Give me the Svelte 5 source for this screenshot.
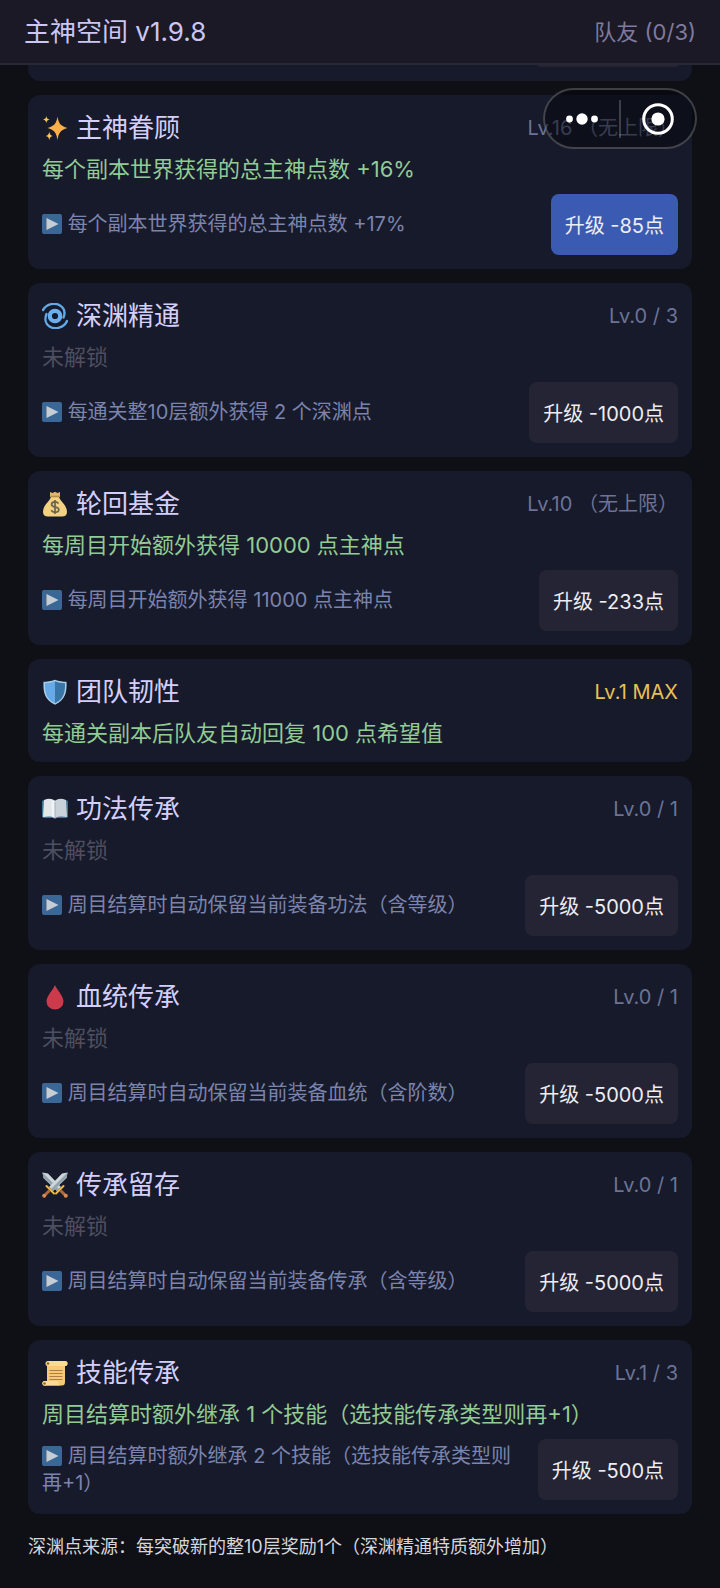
<script lang="ts">
	type Trait = {
		icon: string;
		name: string;
		level: string;
		maxed?: boolean;
		current?: string;
		next?: string;
		cost?: number;
		affordable?: boolean;
	};

	const version = '1.9.8';
	const teammates = 0;

	const traits: Trait[] = [
		{
			icon: 'sparkles',
			name: '主神眷顾',
			level: 'Lv.16 （无上限）',
			current: '每个副本世界获得的总主神点数 +16%',
			next: '每个副本世界获得的总主神点数 +17%',
			cost: 85,
			affordable: true
		},
		{ icon: 'cyclone', name: '深渊精通', level: 'Lv.0 / 3', next: '每通关整10层额外获得 2 个深渊点', cost: 1000 },
		{
			icon: 'money',
			name: '轮回基金',
			level: 'Lv.10 （无上限）',
			current: '每周目开始额外获得 10000 点主神点',
			next: '每周目开始额外获得 11000 点主神点',
			cost: 233
		},
		{ icon: 'shield', name: '团队韧性', level: 'Lv.1 MAX', maxed: true, current: '每通关副本后队友自动回复 100 点希望值' },
		{ icon: 'book', name: '功法传承', level: 'Lv.0 / 1', next: '周目结算时自动保留当前装备功法（含等级）', cost: 5000 },
		{ icon: 'blood', name: '血统传承', level: 'Lv.0 / 1', next: '周目结算时自动保留当前装备血统（含阶数）', cost: 5000 },
		{ icon: 'swords', name: '传承留存', level: 'Lv.0 / 1', next: '周目结算时自动保留当前装备传承（含等级）', cost: 5000 },
		{
			icon: 'scroll',
			name: '技能传承',
			level: 'Lv.1 / 3',
			current: '周目结算时额外继承 1 个技能（选技能传承类型则再+1）',
			next: '周目结算时额外继承 2 个技能（选技能传承类型则再+1）',
			cost: 500
		}
	];
</script>

{#snippet sword()}
	<path d="M.5.5L6 1.500l13 13.500-4 4L1.500 6z" fill="#cdd6da" />
	<path d="M.5.5L17 17l-2 2L1.500 6z" fill="#93a4ad" />
	<path d="M14 21.500l7.500-7.500" stroke="#f0b93f" stroke-width="2" stroke-linecap="round" />
	<path d="M18.500 18.500l4.500 4.500" stroke="#b5673f" stroke-width="3" />
	<circle cx="23.800" cy="23.800" r="2" fill="#d98a4e" />
{/snippet}

{#snippet traitIcon(kind: string)}
	<svg class="icon" viewBox="0 0 26 26" aria-hidden="true">
		{#if kind === 'sparkles'}
			<path d="M15.500 1.500c1.200 7 3 9.500 10 11.500-7 2-8.800 4.500-10 12-1.200-7.500-3-10-10-12 7-2 8.800-4.500 10-11.500z" fill="#f9b04b" />
			<path d="M4.300 1c.5 2.300 1 2.900 3.300 3.600-2.300.6-2.800 1.200-3.300 3.600C3.800 5.800 3.300 5.200 1 4.600 3.300 3.900 3.800 3.300 4.300 1z" fill="#fbc65a" />
			<path d="M7.300 16.500c.5 3 1.100 3.800 3.600 4.500-2.500.7-3.100 1.500-3.600 4.300-.5-2.800-1.100-3.600-3.600-4.300 2.500-.7 3.100-1.500 3.600-4.500z" fill="#fbc65a" />
		{:else if kind === 'cyclone'}
			<circle cx="13" cy="13" r="5.200" fill="none" stroke="#6bb0ee" stroke-width="4.200" />
			<path d="M1 7C5 .500 13-.500 18 2.500c4 2.500 5.500 7 3.500 12" fill="none" stroke="#62a9e8" stroke-width="2.400" stroke-linecap="round" />
			<path d="M25 18c-3 7-12 9-17.500 5.500C3.500 21 2.500 16 4.500 11" fill="none" stroke="#62a9e8" stroke-width="2.400" stroke-linecap="round" />
		{:else if kind === 'money'}
			<path d="M8 1l2.500 1L13 .800 15.500 2 18 1v5H8z" fill="#e4b565" />
			<path d="M9 6h8c1 4 8 8 8 15 0 3-2 4.500-5 4.500H6c-3 0-5-1.500-5-4.500C1 14 8 10 9 6z" fill="#f3d183" />
			<path d="M8.500 5.500h9" stroke="#b58a45" stroke-width="1.500" />
			<path d="M16.500 12.500c-1-1.300-2-1.700-3.500-1.700-2 0-3.400 1-3.400 2.600 0 3.600 7.200 1.700 7.200 5.200 0 1.700-1.600 2.700-3.700 2.700-1.700 0-3-.6-3.900-2M13 9v14" fill="none" stroke="#696451" stroke-width="1.700" />
		{:else if kind === 'shield'}
			<path d="M13 .800c4 1.500 8 2 11.500 2C25 13 23.500 21 13 25.800 2.500 21 1 13 1.500 2.800 5 2.800 9 2.300 13 .800z" fill="#a9cfe8" />
			<path d="M13 2.300v22C4 20 2.800 13 3 4.200c3.500 0 7-.6 10-1.900z" fill="#66aae8" />
			<path d="M13 2.300c3 1.300 6.500 1.900 10 1.900.2 8.800-1 15.800-10 20.100z" fill="#3a75a8" />
		{:else if kind === 'book'}
			<path d="M0 5l2-1h22l2 1v16l-2 1H15l-2 1-2-1H2l-2-1z" fill="#457494" />
			<path d="M2 4c5-1.800 8-1.500 11 1v17c-4-2-8-1.500-12-1z" fill="#e2e7eb" />
			<path d="M24 4c-5-1.800-8-1.500-11 1v17c4-2 8-1.500 12-1z" fill="#cad2d9" />
			<path d="M9.500 4l3.500 2v16l-3-1.500z" fill="#f2f4f5" />
			<path d="M13 6v16" stroke="#a3afb9" stroke-width="1" />
		{:else if kind === 'blood'}
			<path d="M13 1c2 5 8.500 11 8.500 16.500a8.500 8 0 0 1-17 0C4.500 12 11 6 13 1z" fill="#cb3b4b" />
		{:else if kind === 'swords'}
			<g>{@render sword()}</g>
			<g transform="translate(26 0) scale(-1 1)">{@render sword()}</g>
		{:else}
			<path d="M6 1h17c3 0 3.500 4 .500 5H23v16c0 2.500-1 3.500-3 3.500H3L5 21V6z" fill="#f3ca75" />
			<path d="M6 1h17c3 0 3.500 4 .500 5H7z" fill="#f9dc94" />
			<path d="M2.500 21H17c-1.500 2 0 4.500 2 4.500H3c-3 0-3.500-4-.500-4.500z" fill="#f9dc94" />
			<path d="M7.500 10.500h13M7.500 13.500h13M7.500 16.500h13M7.500 19.500h13" stroke="#b47a45" stroke-width="1.200" />
			<circle cx="6" cy="3.500" r="2.500" fill="#f9dc94" />
			<circle cx="6" cy="3.500" r="1.300" fill="#925837" />
			<circle cx="2.500" cy="23.500" r="2.200" fill="#f9dc94" />
			<circle cx="2.500" cy="23.500" r="1.200" fill="#925837" />
		{/if}
	</svg>
{/snippet}

<div class="page">
	<header>
		<h1>主神空间 v{version}</h1>
		<span class="team">队友 ({teammates}/3)</span>
	</header>

	<div class="capsule">
		<button class="cap-btn" aria-label="更多">
			<svg width="32" height="14" viewBox="0 0 32 14">
				<circle cx="3.500" cy="7" r="3.400" />
				<circle cx="16" cy="7" r="5.700" />
				<circle cx="28.500" cy="7" r="3.400" />
			</svg>
		</button>
		<span class="divider"></span>
		<button class="cap-btn" aria-label="关闭">
			<svg width="32" height="32" viewBox="0 0 32 32">
				<circle cx="16" cy="16" r="14.300" class="ring" />
				<circle cx="16" cy="16" r="6.600" />
			</svg>
		</button>
	</div>

	<main>
		<!-- tail of the card scrolled under the header -->
		<div class="tail"><span></span></div>

		{#each traits as trait (trait.name)}
			<article class="card">
				<div class="head">
					{@render traitIcon(trait.icon)}
					<h2>{trait.name}</h2>
					<span class="level" class:maxed={trait.maxed}>{trait.level}</span>
				</div>
				<p class="effect" class:locked={!trait.current}>{trait.current ?? '未解锁'}</p>
				{#if trait.next}
					<div class="action">
						<p class="next">
							<svg class="play" viewBox="0 0 20 20" aria-hidden="true">
								<rect width="20" height="20" rx="2" fill="#3b6797" />
								<path d="M4.500 4l12 6-12 6z" fill="#c6cdd4" />
							</svg>
							{trait.next}
						</p>
						<button class="upgrade" class:affordable={trait.affordable}>升级 -{trait.cost}点</button>
					</div>
				{/if}
			</article>
		{/each}

		<p class="note">深渊点来源：每突破新的整10层奖励1个（深渊精通特质额外增加）</p>
	</main>
</div>

<style>
	:global(body) {
		background: #0f0f16;
	}
	.page {
		font-family: Inter, 'Noto Sans CJK SC', sans-serif;
		color: #d6d6de;
	}
	h1,
	h2,
	p {
		margin: 0;
		font-weight: 400;
	}
	header {
		position: sticky;
		top: 0;
		z-index: 1;
		display: flex;
		align-items: center;
		justify-content: space-between;
		box-sizing: border-box;
		height: 65px;
		padding: 0 24px;
		background: #1a1925;
		border-bottom: 2px solid #292936;
	}
	h1 {
		font-size: 26px;
		line-height: 36px;
		color: #cbc6f4;
	}
	.team {
		font-size: 22px;
		line-height: 36px;
		color: #7f7a9e;
	}

	/* floating mini-program menu */
	.capsule {
		position: fixed;
		top: 88px;
		right: 23px;
		z-index: 2;
		display: flex;
		align-items: center;
		box-sizing: border-box;
		width: 154px;
		height: 61px;
		background: rgba(4, 5, 12, 0.5);
		border: 2px solid rgba(255, 255, 255, 0.22);
		border-radius: 31px;
	}
	.cap-btn {
		display: flex;
		flex: 1;
		align-items: center;
		justify-content: center;
		height: 100%;
		padding: 0;
		background: none;
		border: none;
		cursor: pointer;
	}
	.cap-btn svg {
		fill: #fff;
	}
	.cap-btn .ring {
		fill: none;
		stroke: #fff;
		stroke-width: 3;
	}
	.divider {
		width: 2px;
		height: 38px;
		background: rgba(255, 255, 255, 0.2);
	}

	main {
		display: flex;
		flex-direction: column;
		gap: 14px;
		padding: 0 28px 32px;
	}
	.tail {
		display: flex;
		justify-content: flex-end;
		height: 16px;
		padding: 0 14px;
		background: #171a2a;
		border-radius: 0 0 12px 12px;
	}
	.tail span {
		width: 140px;
		height: 2px;
		background: #242434;
		border-radius: 0 0 8px 8px;
	}
	.card {
		padding: 14px;
		background: #171a2a;
		border-radius: 12px;
	}
	.head {
		display: flex;
		align-items: center;
		gap: 8px;
		height: 38px;
	}
	.icon {
		flex: none;
		width: 26px;
		height: 26px;
	}
	h2 {
		flex: 1;
		font-size: 26px;
		line-height: 38px;
		color: #d4cffa;
	}
	.level {
		font-size: 20px;
		line-height: 38px;
		color: #6c7396;
	}
	.level.maxed {
		color: #e8c054;
	}
	.effect {
		margin-top: 6px;
		font-size: 22px;
		line-height: 32px;
		color: #92cb94;
	}
	.effect.locked {
		color: #4d4f60;
	}
	.action {
		display: flex;
		align-items: center;
		justify-content: space-between;
		gap: 12px;
		margin-top: 9px;
	}
	.card:not(:has(.action)) {
		padding-bottom: 13px;
	}
	.next {
		font-size: 20px;
		line-height: 27px;
		color: #7b84ad;
	}
	.play {
		width: 20px;
		height: 20px;
		vertical-align: -3px;
	}
	.upgrade {
		flex: none;
		height: 61px;
		padding: 0 14px;
		font-family: inherit;
		font-size: 20px;
		color: #ededf2;
		background: #242434;
		border: none;
		border-radius: 8px;
		cursor: pointer;
	}
	.upgrade.affordable {
		background: #3b5bb2;
	}
	.note {
		margin-top: 4px;
		font-size: 18px;
		line-height: 30px;
	}
</style>
